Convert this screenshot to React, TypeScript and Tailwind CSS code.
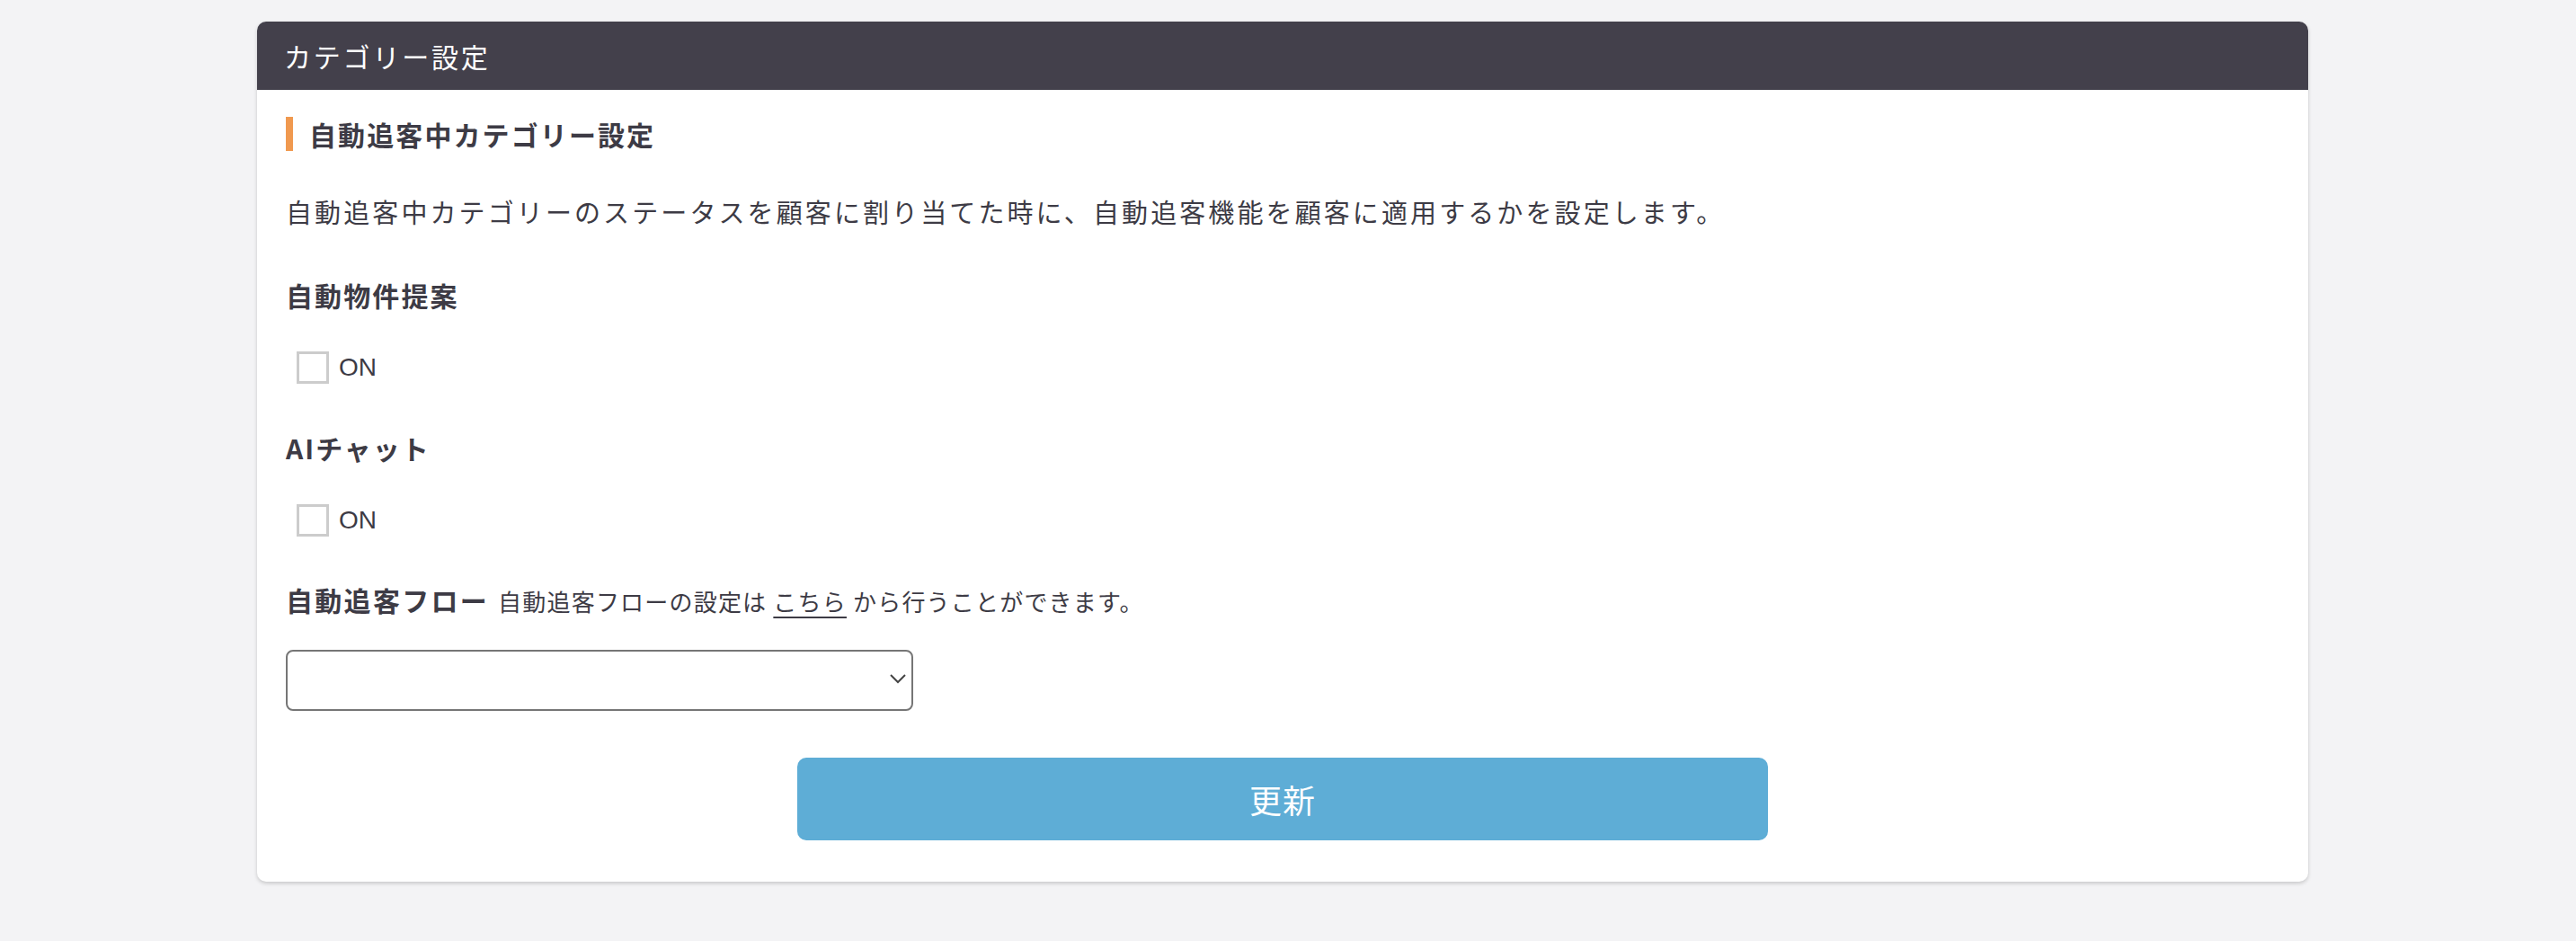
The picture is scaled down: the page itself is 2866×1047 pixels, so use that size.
import React, { useState } from 'react';

const font = "font-['Noto_Sans_CJK_JP','Noto_Sans',sans-serif]";

function Checkbox({ checked, onChange }: { checked: boolean; onChange: () => void }) {
  return (
    <label className="flex h-[36px] items-center cursor-pointer pl-[12px]">
      <span
        onClick={onChange}
        className={`box-border h-[36px] w-[36px] border-[3px] border-[#cccccc] bg-white ${checked ? 'bg-[#5eadd6]' : ''}`}
      />
      <span className="ml-[11px] font-['Liberation_Sans','Noto_Sans',sans-serif] text-[28px] leading-[36px] text-[#3d3b45]">
        ON
      </span>
    </label>
  );
}

export default function App() {
  const [autoProposal, setAutoProposal] = useState(false);
  const [aiChat, setAiChat] = useState(false);

  return (
    <div className={`min-h-[1047px] w-full bg-[#f3f3f5] pt-[24px] ${font}`}>
      <div className="ml-[286px] w-[2282px] rounded-[10px] bg-white shadow-[0_2px_4px_rgba(0,0,0,0.18)]">
        {/* header */}
        <div className="flex h-[76px] items-center rounded-t-[10px] bg-[#43404b] px-[30px]">
          <h1 className="text-[30px] font-normal tracking-[2.8px] text-white">カテゴリー設定</h1>
        </div>

        <div className="px-[32px] pt-[30px] pb-[46px] text-[#3d3b45]">
          <div className="flex h-[38px] items-center border-l-[8px] border-[#f0994f] pl-[18px]">
            <h2 className="text-[30px] font-bold leading-[38px] tracking-[2.1px]">自動追客中カテゴリー設定</h2>
          </div>

          <p className="mt-[45px] text-[29px] leading-[44px] tracking-[3.1px]">
            自動追客中カテゴリーのステータスを顧客に割り当てた時に、自動追客機能を顧客に適用するかを設定します。
          </p>

          <h3 className="mt-[51px] text-[30px] font-bold leading-[40px] tracking-[2.1px]">自動物件提案</h3>
          <div className="mt-[43px]">
            <Checkbox checked={autoProposal} onChange={() => setAutoProposal(!autoProposal)} />
          </div>

          <h3 className="mt-[51px] text-[30px] font-bold leading-[40px] tracking-[2px]">AIチャット</h3>
          <div className="mt-[43px]">
            <Checkbox checked={aiChat} onChange={() => setAiChat(!aiChat)} />
          </div>

          <div className="mt-[50px] flex items-baseline leading-[40px]">
            <h3 className="text-[30px] font-bold tracking-[2.3px]">自動追客フロー</h3>
            <span className="ml-[10px] text-[26px] tracking-[1.2px]">
              自動追客フローの設定は{' '}
              <a href="#" className="underline decoration-[2px] underline-offset-[6px]">
                こちら
              </a>{' '}
              から行うことができます。
            </span>
          </div>

          <div className="relative mt-[34px] h-[68px] w-[698px]">
            <select className="h-full w-full appearance-none rounded-[8px] border-2 border-[#767676] bg-white px-[16px] text-[28px] outline-none">
              <option value=""></option>
            </select>
            <svg
              className="pointer-events-none absolute right-[8px] top-[27px]"
              width="18"
              height="11"
              viewBox="0 0 18 11"
              fill="none"
            >
              <path d="M1 1l8 8 8-8" stroke="#444" strokeWidth="2" />
            </svg>
          </div>

          <div className="mt-[52px] flex justify-center">
            <button className="h-[92px] w-[1080px] rounded-[10px] bg-[#5eadd6] text-[36px] tracking-[1px] text-white">
              更新
            </button>
          </div>
        </div>
      </div>
    </div>
  );
}
